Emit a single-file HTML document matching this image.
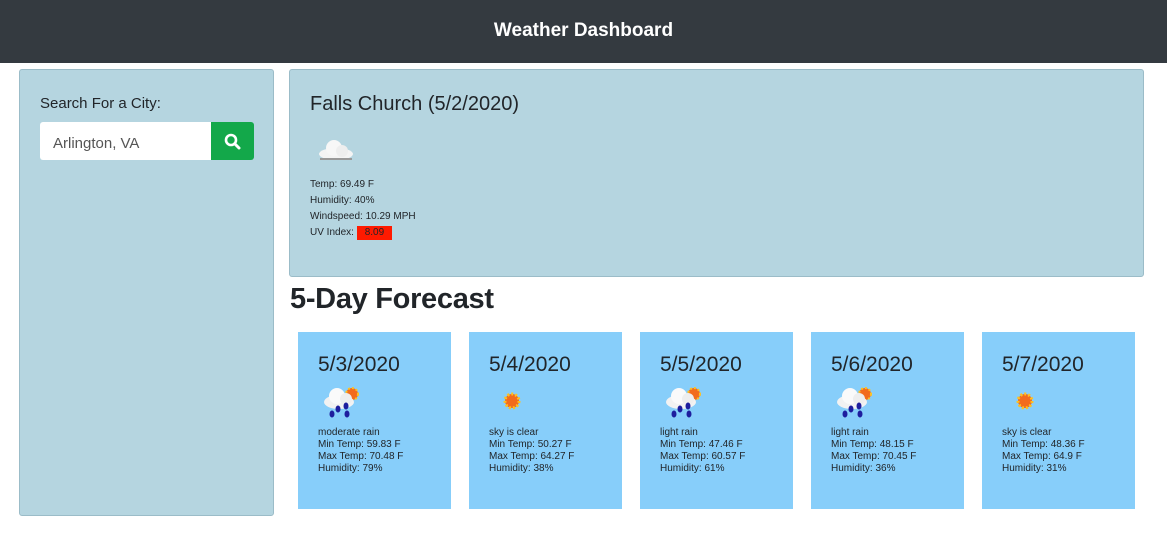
<!DOCTYPE html>
<html><head><meta charset="utf-8"><style>
*{box-sizing:border-box;margin:0;padding:0}
body{width:1167px;height:534px;background:#fff;font-family:"Liberation Sans",sans-serif;color:#212529;position:relative;overflow:hidden}
.hdr{position:absolute;left:0;top:0;width:1167px;height:63px;background:#343a40;color:#fff;font-weight:bold;font-size:19px;text-align:center;line-height:62px}
.panel{position:absolute;background:#b5d5e0;border:1px solid #9bbcc8;border-radius:3px}
.abs{position:absolute;white-space:nowrap}
.card{position:absolute;top:332px;width:153px;height:177px;background:#87cefa}
.card .d{position:absolute;left:20px;top:21px;font-size:21px}
.card .ic{position:absolute;left:24px;top:53px}
.card .t{position:absolute;left:20px;top:95px;font-size:10px;line-height:12px}
.sm{font-size:10px;line-height:16px}
</style></head><body>
<div class="hdr">Weather Dashboard</div>
<div class="panel" style="left:19px;top:69px;width:255px;height:447px">
 <div class="abs" style="left:20px;top:25px;font-size:15px">Search For a City:</div>
 <div class="abs" style="left:20px;top:52px;width:172px;height:38px;background:#fff;border-radius:3px 0 0 3px;font-size:15px;color:#555;padding:13px 0 0 13px">Arlington, VA</div>
 <div class="abs" style="left:191px;top:52px;width:43px;height:38px;background:#13a84a;border-radius:0 3px 3px 0">
  <svg width="43" height="38"><circle cx="20" cy="18" r="5" fill="none" stroke="#fff" stroke-width="2.6"/><line x1="24" y1="22" x2="28" y2="26" stroke="#fff" stroke-width="3" stroke-linecap="round"/></svg>
 </div>
</div>
<div class="panel" style="left:289px;top:69px;width:855px;height:208px">
 <div class="abs" style="left:20px;top:23px;font-size:20px">Falls Church (5/2/2020)</div>
 <svg class="abs" style="left:26px;top:66px" width="40" height="26"><ellipse cx="20" cy="18" rx="17" ry="6" fill="#f4f4f4"/><circle cx="18" cy="12" r="8" fill="#f7f7f7"/><circle cx="26" cy="15" r="6" fill="#eee"/><rect x="4" y="22" width="32" height="2" fill="#999"/></svg>
 <div class="abs sm" style="left:20px;top:107px">Temp: 69.49 F<br>Humidity: 40%<br>Windspeed: 10.29 MPH<br>UV Index: <span style="background:#ff1a00;padding:0 8px;display:inline-block;line-height:14px">8.09</span></div>
</div>
<div class="abs" style="left:290px;top:283px;font-size:29px;font-weight:bold;letter-spacing:-0.3px">5-Day Forecast</div>

<svg width="0" height="0" style="position:absolute"><defs>
<g id="rain"><circle cx="30" cy="9" r="6" fill="#f26b1d" stroke="#ffc020" stroke-width="2" stroke-dasharray="2 2"/><ellipse cx="17" cy="17" rx="15" ry="7" fill="#f2f2f2"/><circle cx="15" cy="11" r="8" fill="#fafafa"/><circle cx="24" cy="14" r="6" fill="#eee"/><ellipse cx="16" cy="24" rx="2.5" ry="3.5" fill="#1e1e9e"/><ellipse cx="24" cy="21" rx="2.5" ry="3.5" fill="#1e1e9e"/><ellipse cx="10" cy="29" rx="2.5" ry="3.5" fill="#1e1e9e"/><ellipse cx="25" cy="29" rx="2.5" ry="3.5" fill="#1e1e9e"/></g>
<g id="sun"><circle cx="19" cy="16" r="7" fill="#f26b1d" stroke="#ffc020" stroke-width="3" stroke-dasharray="2 2"/></g>
</defs></svg>

<div class="card" style="left:298px"><div class="d">5/3/2020</div><svg class="ic" width="40" height="34"><use href="#rain"/></svg><div class="t">moderate rain<br>Min Temp: 59.83 F<br>Max Temp: 70.48 F<br>Humidity: 79%</div></div>
<div class="card" style="left:469px"><div class="d">5/4/2020</div><svg class="ic" width="40" height="34"><use href="#sun"/></svg><div class="t">sky is clear<br>Min Temp: 50.27 F<br>Max Temp: 64.27 F<br>Humidity: 38%</div></div>
<div class="card" style="left:640px"><div class="d">5/5/2020</div><svg class="ic" width="40" height="34"><use href="#rain"/></svg><div class="t">light rain<br>Min Temp: 47.46 F<br>Max Temp: 60.57 F<br>Humidity: 61%</div></div>
<div class="card" style="left:811px"><div class="d">5/6/2020</div><svg class="ic" width="40" height="34"><use href="#rain"/></svg><div class="t">light rain<br>Min Temp: 48.15 F<br>Max Temp: 70.45 F<br>Humidity: 36%</div></div>
<div class="card" style="left:982px"><div class="d">5/7/2020</div><svg class="ic" width="40" height="34"><use href="#sun"/></svg><div class="t">sky is clear<br>Min Temp: 48.36 F<br>Max Temp: 64.9 F<br>Humidity: 31%</div></div>
</body></html>
